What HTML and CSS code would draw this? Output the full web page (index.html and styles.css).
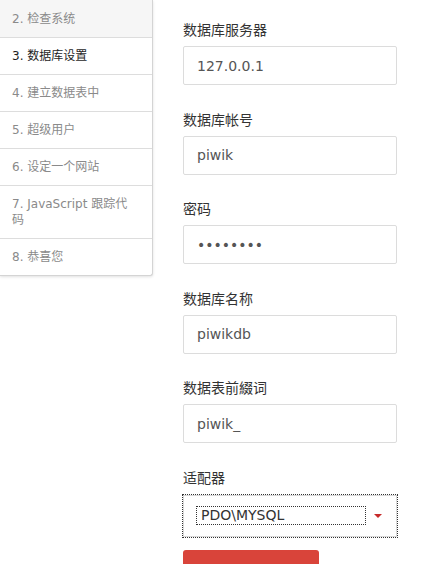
FILE: index.html
```html
<!DOCTYPE html>
<html lang="zh">
<head>
<meta charset="utf-8">
<title>数据库设置</title>
<link rel="stylesheet" href="styles.css">
</head>
<body>
<div class="page">
  <ul class="steps">
    <li class="step done">2. 检查系统</li>
    <li class="step active">3. 数据库设置</li>
    <li class="step">4. 建立数据表中</li>
    <li class="step">5. 超级用户</li>
    <li class="step">6. 设定一个网站</li>
    <li class="step">7. JavaScript 跟踪代码</li>
    <li class="step">8. 恭喜您</li>
  </ul>
  <form class="form">
    <div class="group">
      <label class="label">数据库服务器</label>
      <input class="field" type="text" value="127.0.0.1">
    </div>
    <div class="group">
      <label class="label">数据库帐号</label>
      <input class="field" type="text" value="piwik">
    </div>
    <div class="group">
      <label class="label">密码</label>
      <input class="field" type="password" value="12345678">
    </div>
    <div class="group">
      <label class="label">数据库名称</label>
      <input class="field" type="text" value="piwikdb">
    </div>
    <div class="group">
      <label class="label">数据表前綴词</label>
      <input class="field" type="text" value="piwik_">
    </div>
    <div class="group">
      <label class="label">适配器</label>
      <div class="select">
        <span class="select-value">PDO\MYSQL</span>
        <span class="caret"></span>
      </div>
    </div>
    <button class="btn" type="button">下一步 »</button>
  </form>
</div>
</body>
</html>
```
FILE: styles.css
```css
html, body {
  margin: 0;
  padding: 0;
  background: #fff;
}
body {
  font-family: "DejaVu Sans", "Noto Sans CJK SC", sans-serif;
  color: #333;
  overflow: hidden;
}
.page {
  display: flex;
  align-items: flex-start;
}
.steps {
  list-style: none;
  margin: 0;
  padding: 0;
  width: 152px;
  flex: none;
  border-right: 1px solid #d4d4d4;
  border-bottom: 1px solid #d4d4d4;
  border-bottom-right-radius: 3px;
  box-shadow: 0 1px 3px rgba(0,0,0,0.12);
  background: #fff;
}
.step {
  font-size: 12px;
  line-height: 16px;
  padding: 10px 16px 10px 12px;
  color: #8a8a8a;
  border-bottom: 1px solid #ddd;
}
.step:last-child {
  border-bottom: none;
}
.step.done {
  background: #f6f6f6;
  padding-top: 11px;
}
.step.active {
  color: #1e1e1e;
}
.form {
  margin: 0;
  padding: 20px 0 0 30px;
  width: 214px;
}
.group {
  margin-bottom: 24.5px;
}
.label {
  display: block;
  font-size: 14px;
  line-height: 20px;
  color: #333;
  margin-bottom: 6px;
}
.field {
  display: block;
  box-sizing: border-box;
  width: 214px;
  height: 39px;
  margin: 0;
  padding: 0 13px;
  border: 1px solid #dcdcdc;
  border-radius: 2px;
  font-family: "DejaVu Sans", sans-serif;
  font-size: 14px;
  color: #555;
  background: #fff;
  outline: none;
}
.select {
  box-sizing: border-box;
  width: 214px;
  height: 42px;
  margin-top: 7px;
  border: 1px solid #d8d8d8;
  outline: 1px dotted #333;
  display: flex;
  align-items: center;
  padding: 0 14px 0 13px;
  gap: 9px;
}
.select-value {
  flex: 1;
  font-size: 14px;
  line-height: 17px;
  color: #333;
  padding: 0 4px;
  outline: 1px dotted #333;
}
.caret {
  width: 0;
  height: 0;
  border-left: 4px solid transparent;
  border-right: 4px solid transparent;
  border-top: 4px solid #c62a2a;
}
.btn {
  display: block;
  margin-top: -11px;
  width: 136px;
  height: 44px;
  border: none;
  border-radius: 3px;
  background: #d9443a;
  color: #fff;
  font-family: "DejaVu Sans", "Noto Sans CJK SC", sans-serif;
  font-size: 14px;
}
```
